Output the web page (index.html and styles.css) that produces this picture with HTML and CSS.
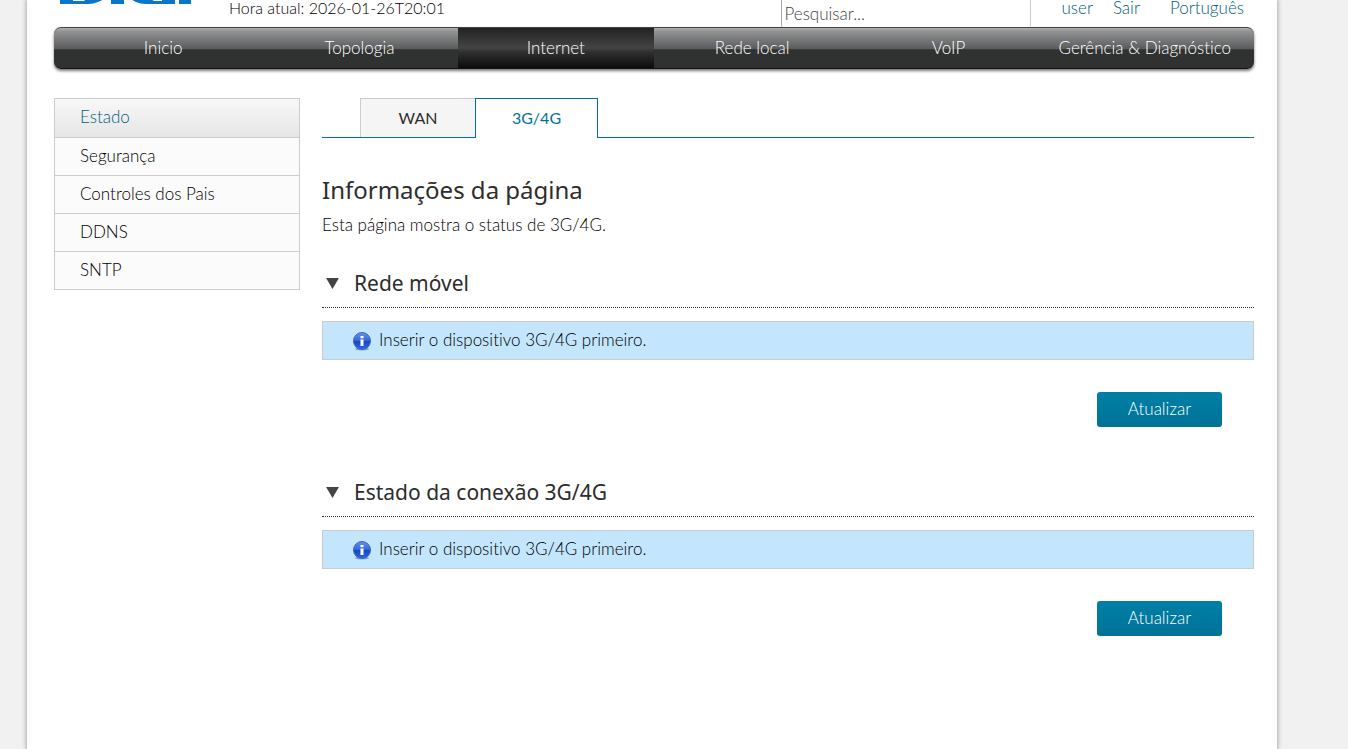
FILE: index.html
```html
<!DOCTYPE html>
<html lang="pt">
<head>
<meta charset="utf-8">
<title>3G/4G</title>
<link rel="stylesheet" href="styles.css">
</head>
<body>
<div class="page">
  <header class="header">
    <svg class="logo" width="132" height="44" viewBox="0 0 132 44" role="img" aria-label="Logo">
      <g fill="#0a76c9">
        <path d="M0 0H24A22 22 0 0 1 38 42Q34 44 28 44H0ZM13 11V41H24Q31 36 31 22T20 11Z"/>
        <path d="M51 0H64V44H51ZM119 0H131V44H119Z"/>
        <path d="M115 0H94A22 22 0 0 0 76 42Q80 44 86 44H115V20H102V41H94Q84 36 84 22T94 11H115Z"/>
      </g>
    </svg>
    <span class="clock">Hora atual: 2026-01-26T20:01</span>
    <input class="search" type="text" placeholder="Pesquisar..." aria-label="Pesquisar">
    <div class="links">
      <a href="#">user</a>
      <a href="#">Sair</a>
      <a class="language" href="#">Português</a>
    </div>
  </header>
  <nav class="nav">
    <a href="#">Inicio</a>
    <a href="#">Topologia</a>
    <a class="active" href="#">Internet</a>
    <a href="#">Rede local</a>
    <a href="#">VoIP</a>
    <a href="#">Gerência &amp; Diagnóstico</a>
  </nav>
  <div class="body">
    <nav class="side">
      <a class="active" href="#">Estado</a>
      <a href="#">Segurança</a>
      <a href="#">Controles dos Pais</a>
      <a href="#">DDNS</a>
      <a href="#">SNTP</a>
    </nav>
    <main class="main">
      <div class="tabs">
        <a class="tab" href="#">WAN</a>
        <a class="tab active" href="#">3G/4G</a>
      </div>
      <h1>Informações da página</h1>
      <p class="intro">Esta página mostra o status de 3G/4G.</p>
      <section class="section">
        <h2><svg class="arrow" width="13" height="11" viewBox="0 0 14 12"><path d="M0 0H14L7 12Z" fill="#444"/></svg>Rede móvel</h2>
        <div class="notice">
          <svg width="20" height="20" viewBox="0 0 20 20"><defs><linearGradient id="blue" x1="0" y1="0" x2="0" y2="1"><stop offset="0" stop-color="#6b92e6"/><stop offset=".48" stop-color="#3566d8"/><stop offset=".52" stop-color="#1746bf"/><stop offset="1" stop-color="#2b67ee"/></linearGradient></defs><ellipse cx="10" cy="18" rx="7" ry="1.5" fill="#7f9fc0"/><circle cx="10" cy="10" r="8.5" fill="url(#blue)" stroke="#3a66c4"/><path d="M8.5 5h3v2.3h-3ZM8.5 8.4h3v6.5h-3Z" fill="#fff"/></svg>
          <span>Inserir o dispositivo 3G/4G primeiro.</span>
        </div>
        <div class="actions"><button type="button">Atualizar</button></div>
      </section>
      <section class="section">
        <h2><svg class="arrow" width="13" height="11" viewBox="0 0 14 12"><path d="M0 0H14L7 12Z" fill="#444"/></svg>Estado da conexão 3G/4G</h2>
        <div class="notice">
          <svg width="20" height="20" viewBox="0 0 20 20"><ellipse cx="10" cy="18" rx="7" ry="1.5" fill="#7f9fc0"/><circle cx="10" cy="10" r="8.5" fill="url(#blue)" stroke="#3a66c4"/><path d="M8.5 5h3v2.3h-3ZM8.5 8.4h3v6.5h-3Z" fill="#fff"/></svg>
          <span>Inserir o dispositivo 3G/4G primeiro.</span>
        </div>
        <div class="actions"><button type="button">Atualizar</button></div>
      </section>
    </main>
  </div>
</div>
</body>
</html>
```
FILE: styles.css
```css
* { box-sizing: border-box; }
body {
  margin: 0;
  background: #f1f1f1;
  color: #000;
  font: 300 17px/20px Lato, sans-serif;
  font-variant-ligatures: none;
}
a { color: #006080; text-decoration: none; }
.page {
  min-height: 100vh;
  margin: 0 71px 0 27px;
  padding: 0 23px 0 27px;
  background: #fff;
  box-shadow: 0 0 4px 1px #aaa;
}
.header {
  display: flex;
  align-items: flex-end;
  height: 27px;
  overflow: hidden;
  line-height: 16px;
}
.logo { flex: none; margin: 0 37px 23px 6px; }
.clock {
  margin-bottom: 11px;
  font-size: 16px;
  white-space: nowrap;
}
.search {
  width: 250px;
  height: 28px;
  flex: none;
  margin-left: auto;
  padding: 0 2px;
  border: 1px solid #aaa;
  border-width: 0 1px;
  border-right-color: #ccc;
  border-radius: 2px;
  font: inherit;
}
.search::placeholder { color: #444; }
.links {
  display: flex;
  gap: 20px;
  margin: 0 10px 11px 30px;
}
.language { margin-left: 10px; }
.nav {
  display: grid;
  grid-template-columns: repeat(6, 1fr);
  height: 42px;
  padding: 0 11px;
  border-top: 1px solid #444;
  border-bottom: 1px solid #111;
  border-radius: 7px;
  background: linear-gradient(#b0b0b0 0, #939393 8%, #585a5c 53%, #303231 54%, #303231 100%);
  box-shadow: 0 2px 3px #777;
}
.nav a {
  height: 40px;
  color: #fff;
  line-height: 40px;
  text-align: center;
  white-space: nowrap;
}
.nav .active { background: linear-gradient(#222, #444 50%, #303030 60%, #0c0c0c); }
.body {
  display: flex;
  align-items: flex-start;
  gap: 22px;
  margin-top: 29px;
}
.side {
  width: 246px;
  flex: none;
  border: 1px solid #ccc;
  background: #fbfbfb;
}
.side a {
  display: block;
  padding: 7px 25px 9px;
  color: #000;
  line-height: 21px;
}
.side a + a { border-top: 1px solid #ccc; }
.side .active {
  padding-bottom: 10px;
  background: linear-gradient(#f8f8f8, #e5e5e5);
}
.side a.active { color: #006080; }
.main { flex: 1; min-width: 0; }
.tabs {
  display: flex;
  padding-left: 38px;
  border-bottom: 1px solid #007297;
}
.tab {
  width: 115px;
  height: 39px;
  border: 1px solid #ccc;
  border-width: 1px 0 0 1px;
  background: #f5f5f5;
  color: #2d2d2d;
  font-size: 16px;
  font-weight: 400;
  line-height: 37px;
  text-align: center;
}
.tab.active {
  width: 123px;
  height: 40px;
  margin-bottom: -1px;
  border: 1px solid #007297;
  border-bottom: 0;
  background: #fff;
  color: #007297;
}
h1, h2 {
  margin: 0;
  color: #2d2d2d;
  font-family: "Noto Sans", sans-serif;
  font-weight: 400;
}
h1 { margin-top: 35px; font-size: 24px; line-height: 34px; }
.intro { margin: 8px 0 32px; }
h2 {
  display: flex;
  align-items: center;
  gap: 15px;
  padding: 0 0 8px 4px;
  border-bottom: 1px dotted #2d2d2d;
  font-size: 21px;
  line-height: 32px;
}
.notice {
  display: flex;
  align-items: center;
  gap: 7px;
  height: 39px;
  margin-top: 13px;
  padding-left: 29px;
  border: 1px solid #ccc;
  background: #c3e6fc;
}
.notice span { padding-bottom: 1px; }
.actions {
  display: flex;
  justify-content: flex-end;
  padding: 32px 32px 49px 0;
}
button {
  width: 125px;
  height: 35px;
  padding: 0 0 2px;
  border: 0;
  border-radius: 3px;
  background: linear-gradient(#007fa6, #007297);
  color: #fff;
  font: inherit;
}
```
